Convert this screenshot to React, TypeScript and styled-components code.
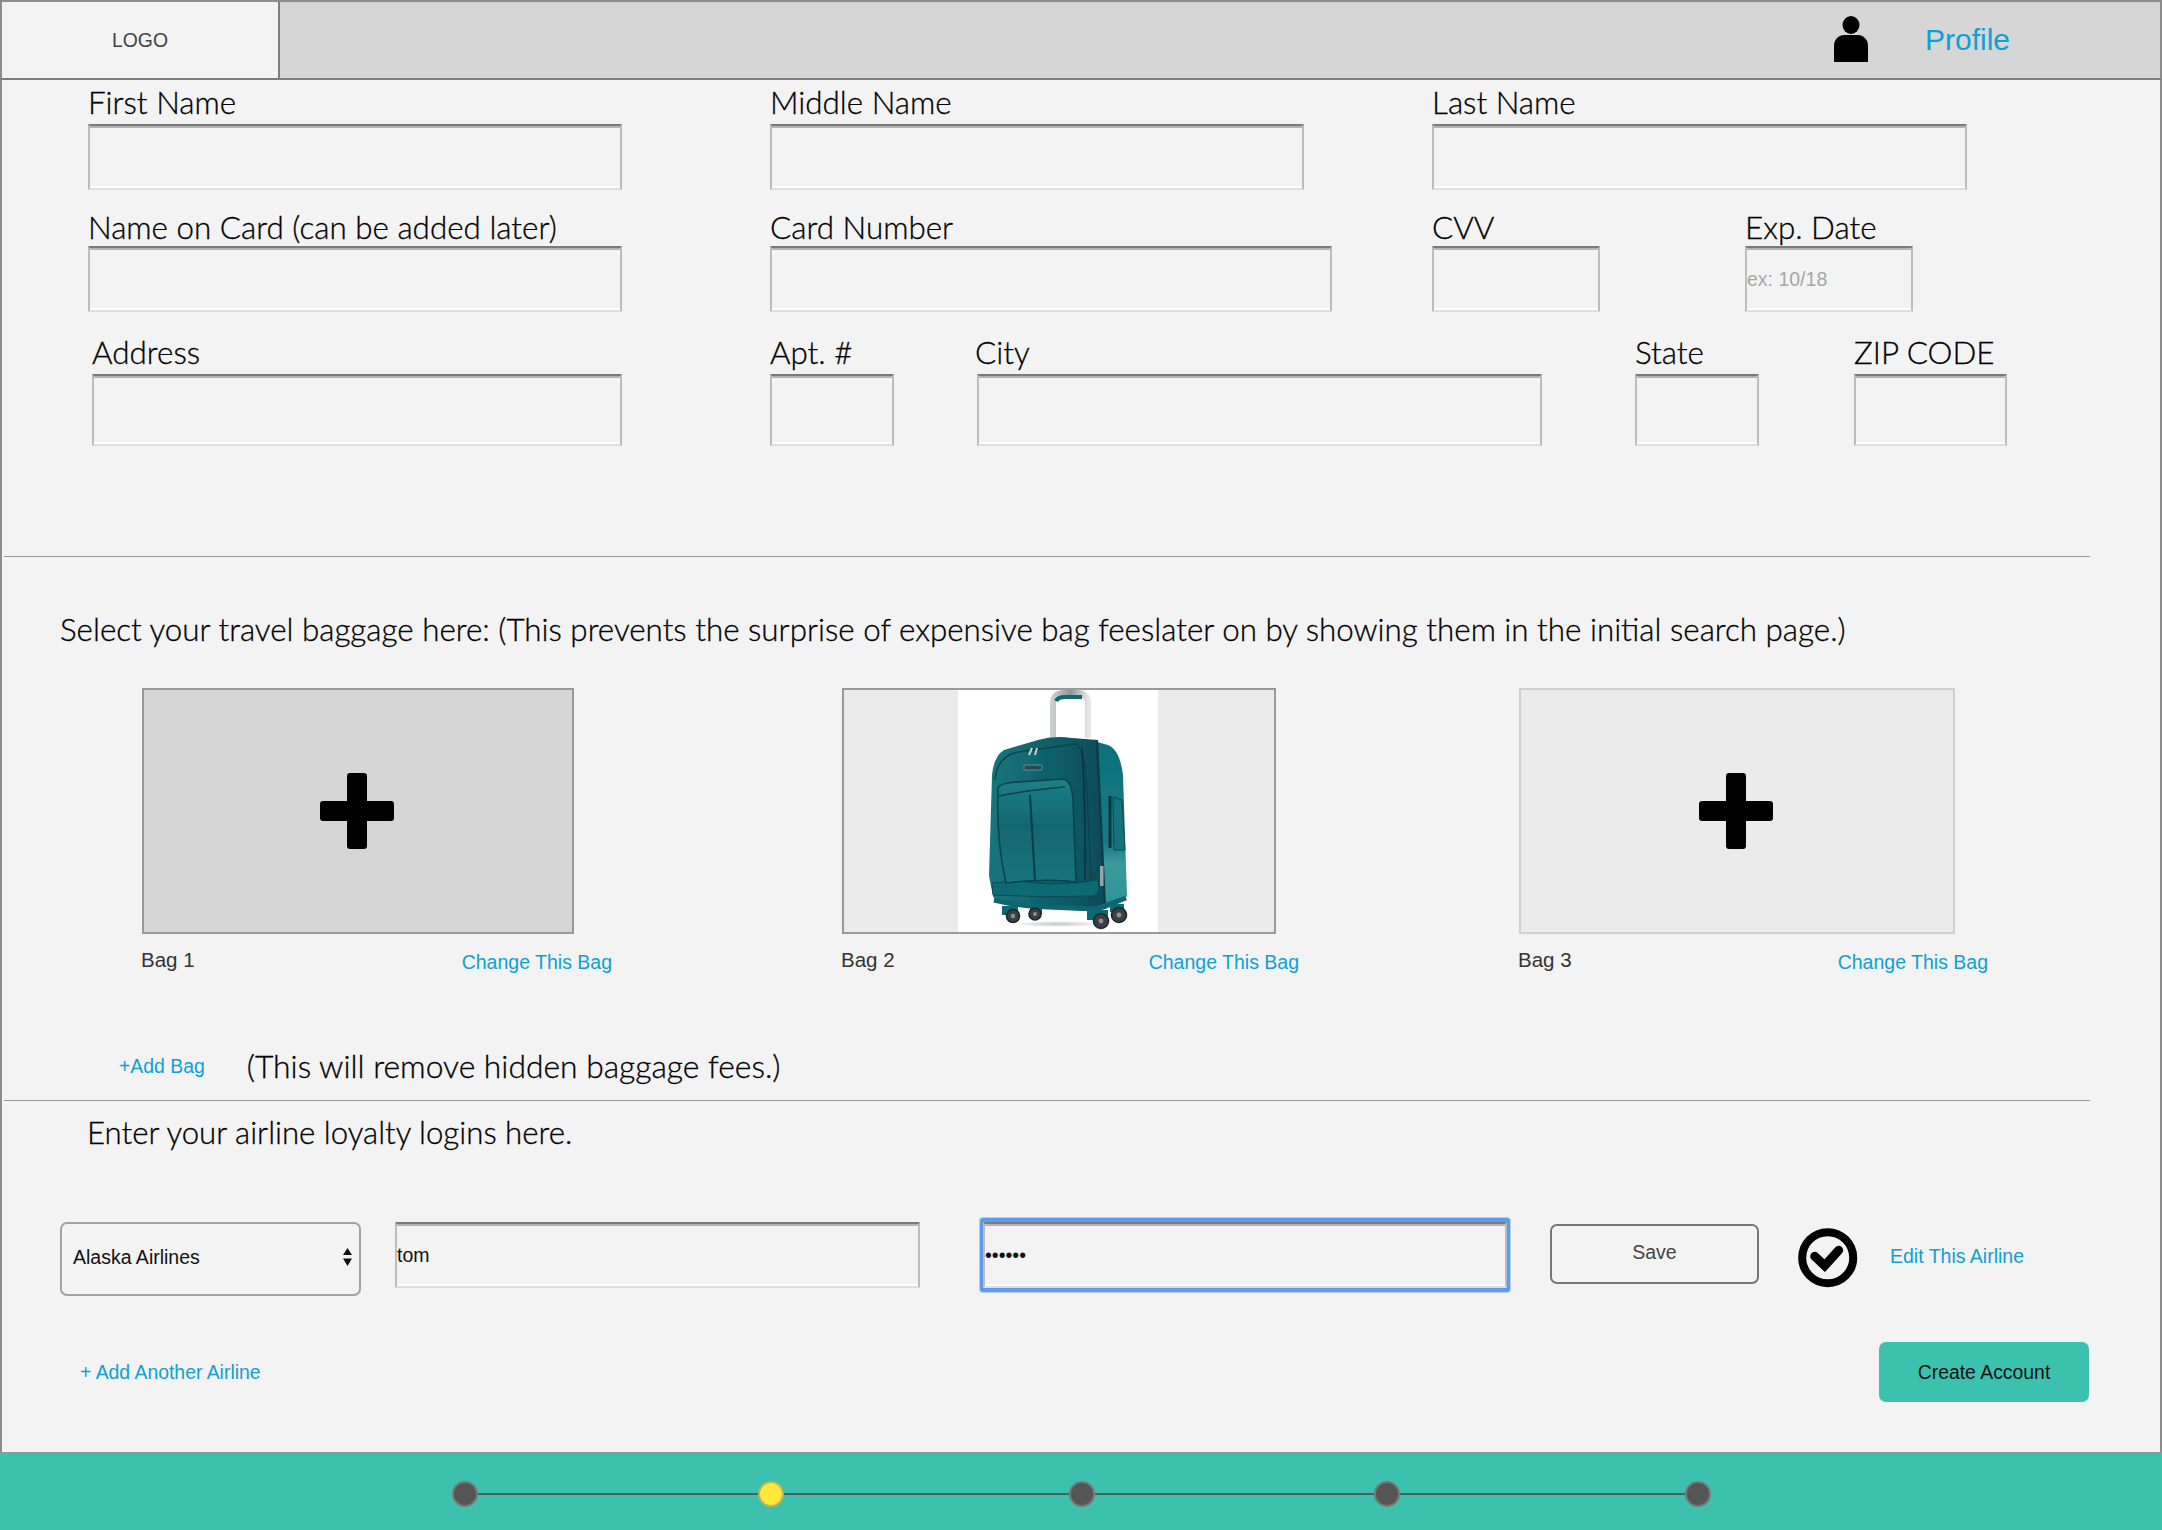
import React from 'react';
import styled, { createGlobalStyle } from 'styled-components';

const GlobalStyle = createGlobalStyle`
  html, body {
    margin: 0;
    padding: 0;
    background: #f3f3f3;
  }
  * {
    box-sizing: border-box;
  }
`;

const sans = `"Liberation Sans", Arial, sans-serif`;
const rounded = `Lato, "Open Sans", sans-serif`;
const linkBlue = '#0fa0d6';
const teal = '#3cc1ae';

const Page = styled.div`
  width: 2162px;
  height: 1530px;
  display: flex;
  flex-direction: column;
  background: #f3f3f3;
  overflow: hidden;
`;

const Header = styled.header`
  height: 80px;
  flex: none;
  display: flex;
  align-items: stretch;
  background: #d6d6d6;
  border: 2px solid #8c8c8c;
  border-bottom-color: #7f7f7f;
`;

const LogoBox = styled.div`
  width: 278px;
  display: flex;
  align-items: center;
  justify-content: center;
  background: #f3f3f3;
  border-right: 2px solid #7f7f7f;
  font: 19.4px ${sans};
  color: #444;
`;

const ProfileLink = styled.a`
  margin-left: auto;
  margin-right: 150px;
  display: flex;
  align-items: center;
  gap: 57px;
  font: 30px ${sans};
  color: ${linkBlue};
`;

const PersonSvg = styled.svg`
  margin-bottom: 2px;
`;

const Main = styled.main`
  flex: 1;
  display: flex;
  flex-direction: column;
  border-left: 2px solid #8c8c8c;
  border-right: 2px solid #8c8c8c;
`;

const FormRow = styled.div<{ $top: number; $left: number }>`
  display: flex;
  margin-top: ${(p) => p.$top}px;
  padding-left: ${(p) => p.$left}px;
`;

const Field = styled.label<{ $width: number; $gap?: number }>`
  width: ${(p) => p.$width}px;
  margin-left: ${(p) => p.$gap ?? 0}px;
  flex: none;
  display: block;
`;

const FieldLabel = styled.span<{ $height?: number; $shift?: number }>`
  display: block;
  height: ${(p) => p.$height ?? 40}px;
  margin-left: ${(p) => p.$shift ?? 0}px;
  font: 300 31.4px/36px ${rounded};
  color: #000;
  -webkit-text-stroke: 0.3px #000;
  white-space: nowrap;
  position: relative;
  z-index: 1;
`;

const TextBox = styled.input<{ $height: number }>`
  display: block;
  width: 100%;
  height: ${(p) => p.$height}px;
  padding: 0;
  border: 2px solid #bcbcbc;
  border-top-color: #7b7b7b;
  border-bottom-color: #dedede;
  border-radius: 0;
  box-shadow: inset 0 2px 0 #b4b4b4, inset 0 -2px 0 #fff;
  background: #f3f3f3;
  font: 19.5px ${sans};
  color: #111;
  outline: none;

  &::placeholder {
    color: #a6a6a6;
    opacity: 1;
  }
`;

const Divider = styled.hr<{ $top: number }>`
  width: 2086px;
  height: 1px;
  margin: ${(p) => p.$top}px 0 0 2px;
  border: 0;
  background: #999;
  flex: none;
`;

const SectionText = styled.p<{ $top: number; $left: number; $size?: number }>`
  margin: ${(p) => p.$top}px 0 0 ${(p) => p.$left}px;
  font: 300 ${(p) => p.$size ?? 31.35}px/36px ${rounded};
  color: #000;
  -webkit-text-stroke: 0.3px #000;
  white-space: nowrap;
`;

const BagRow = styled.div`
  display: flex;
  margin-top: 41px;
  padding-left: 140px;
`;

const BagColumn = styled.div<{ $width: number; $gap?: number }>`
  width: ${(p) => p.$width}px;
  margin-left: ${(p) => p.$gap ?? 0}px;
  flex: none;
`;

const BagTile = styled.div<{ $width: number; $tone: 'dark' | 'light' | 'faint' }>`
  width: ${(p) => p.$width}px;
  height: 246px;
  display: flex;
  align-items: center;
  justify-content: center;
  border: 2px solid ${(p) => (p.$tone === 'faint' ? '#cfcfcf' : '#999')};
  background: ${(p) => (p.$tone === 'dark' ? '#d6d6d6' : '#ebebeb')};
`;

const BagCaption = styled.div`
  display: flex;
  justify-content: space-between;
  margin-top: 11px;
  height: 30px;
`;

const BagName = styled.span`
  margin-left: -1px;
  font: 20.5px/30px ${sans};
  color: #333;
`;

const BlueLink = styled.a<{ $size?: number }>`
  font: ${(p) => p.$size ?? 19.5}px/30px ${sans};
  color: ${linkBlue};
  white-space: nowrap;
`;

const ChangeLink = styled(BlueLink)`
  margin-top: 2px;
`;

const AddBagLink = styled(BlueLink)`
  margin-top: 3px;
`;

const AddBagRow = styled.div`
  display: flex;
  align-items: flex-start;
  margin-top: 73px;
  padding-left: 117px;
  gap: 42px;
`;

const AirlineRow = styled.div`
  display: flex;
  align-items: flex-start;
  margin-top: 67px;
  padding-left: 58px;
`;

const SelectWrap = styled.div`
  position: relative;
  width: 301px;
  height: 74px;
  flex: none;
  margin-top: 5px;
`;

const AirlineSelect = styled.select`
  appearance: none;
  width: 100%;
  height: 100%;
  padding: 0 0 4px 11px;
  border: 2px solid #a3a3a3;
  border-radius: 7px;
  background: #f3f3f3;
  font: 19.5px ${sans};
  color: #111;
  outline: none;
`;

const Stepper = styled.svg`
  position: absolute;
  right: 9px;
  top: 26px;
  pointer-events: none;
`;

const LoginBox = styled.div`
  width: 525px;
  flex: none;
  margin: 5px 0 0 34px;
`;

const PasswordBox = styled.div`
  width: 530px;
  margin: 1px 0 0 60px;
  flex: none;
  padding: 4px 3px;
  border-radius: 3px;
  background: #5d9cec;
  box-shadow: 0 0 0 1px #b4cff2;
`;

const SaveButton = styled.button`
  width: 209px;
  height: 60px;
  margin: 7px 0 0 40px;
  flex: none;
  padding: 0 0 4px;
  border: 2px solid #777;
  border-radius: 7px;
  background: #f3f3f3;
  font: 19.5px ${sans};
  color: #444;
`;

const CheckIcon = styled.svg`
  flex: none;
  margin: 11px 0 0 39px;
`;

const EditLink = styled(BlueLink)`
  margin: 24px 0 0 32px;
`;

const ActionRow = styled.div`
  display: flex;
  align-items: center;
  justify-content: space-between;
  margin-top: 46px;
  padding: 0 71px 0 78px;
`;

const CreateButton = styled.button`
  width: 210px;
  height: 60px;
  border: 0;
  border-radius: 7px;
  background: ${teal};
  font: 19.4px ${sans};
  color: #111;
`;

const Footer = styled.footer`
  margin-top: auto;
  height: 78px;
  flex: none;
  display: flex;
  align-items: center;
  padding: 4px 0 0 452px;
  background: ${teal};
  border-top: 2px solid #8f9a97;
`;

const StepDot = styled.span<{ $active?: boolean }>`
  width: 26px;
  height: 26px;
  flex: none;
  border-radius: 50%;
  background: ${(p) => (p.$active ? '#ffe83a' : '#555')};
  border: 2px solid ${(p) => (p.$active ? '#b9b45c' : '#777')};
`;

const StepLine = styled.span<{ $width: number }>`
  width: ${(p) => p.$width}px;
  height: 2px;
  flex: none;
  background: #4f5f5c;
`;

const PhotoSvg = styled.svg`
  background: #fff;
  margin-right: 2px;
`;

const PlusSvg = styled.svg`
  margin-right: 2px;
`;

const PlusIcon = () => (
  <PlusSvg width="74" height="76" viewBox="0 0 74 76" aria-hidden="true">
    <rect x="27" y="0" width="20" height="76" rx="3" fill="#000" />
    <rect x="0" y="28" width="74" height="20" rx="3" fill="#000" />
  </PlusSvg>
);

const PersonIcon = () => (
  <PersonSvg width="34" height="46" viewBox="0 0 34 46" aria-hidden="true">
    <ellipse cx="17" cy="9" rx="8.5" ry="9" fill="#000" />
    <path d="M0 46V30C0 23 5 19 10 19H24C29 19 34 23 34 30V46Z" fill="#000" />
  </PersonSvg>
);

// drawn from the reference photo, blurred a little so it reads like a scaled-down image
const Suitcase = () => (
  <PhotoSvg width="200" height="242" viewBox="0 0 200 242" aria-label="Teal suitcase">
    <defs>
      <linearGradient id="metalLeft" x1="0" y1="0" x2="1" y2="0">
        <stop offset="0" stopColor="#c9cdce" />
        <stop offset="0.5" stopColor="#8d9496" />
        <stop offset="1" stopColor="#e6e8e8" />
      </linearGradient>
      <linearGradient id="frontPanel" x1="0" y1="0" x2="1" y2="0">
        <stop offset="0" stopColor="#16757c" />
        <stop offset="0.55" stopColor="#0f5f69" />
        <stop offset="1" stopColor="#0a4a57" />
      </linearGradient>
      <linearGradient id="pocketPanel" x1="0" y1="0" x2="0" y2="1">
        <stop offset="0" stopColor="#1c8086" />
        <stop offset="0.45" stopColor="#116670" />
        <stop offset="1" stopColor="#1a747a" />
      </linearGradient>
      <linearGradient id="sidePanel" x1="0" y1="0" x2="0" y2="1">
        <stop offset="0" stopColor="#0f7079" />
        <stop offset="0.6" stopColor="#157a82" />
        <stop offset="0.72" stopColor="#3a9a9c" />
        <stop offset="1" stopColor="#2f9297" />
      </linearGradient>
      <radialGradient id="floorShadow">
        <stop offset="0" stopColor="#bfc4c4" />
        <stop offset="1" stopColor="#ffffff" />
      </radialGradient>
      <filter id="soften" x="-5%" y="-5%" width="110%" height="110%">
        <feGaussianBlur stdDeviation="0.55" />
      </filter>
    </defs>
    <g filter="url(#soften)">
      <ellipse cx="100" cy="234" rx="46" ry="3" fill="url(#floorShadow)" />
      <path d="M95 48V14Q95 3 106 3H120Q130 3 130 14V48" fill="none" stroke="url(#metalLeft)" strokeWidth="6" />
      <path d="M98 11Q100 7 107 7H124" fill="none" stroke="#0f6a72" strokeWidth="4" />
      <path d="M132 50L150 55Q162 60 165 85L169 206Q165 214 147 219L136 222Z" fill="url(#sidePanel)" />
      <path d="M34 85Q36 66 46 60L80 50Q96 45 114 48L140 50Q143 130 147 219L130 221L60 217Q37 214 35 206L31 186Z" fill="url(#frontPanel)" />
      <path d="M34 193Q60 190 80 193T140 190L141 198Q140 206 134 206Q84 208 35 205Z" fill="#0e6a72" stroke="#0a4854" strokeWidth="1" />
      <path d="M40 98Q42 93 60 92L105 89Q113 90 115 108L118 192Q90 188 48 193Q38 150 40 98Z" fill="url(#pocketPanel)" stroke="#07404c" strokeWidth="1.5" />
      <path d="M41 106Q70 100 107 97" fill="none" stroke="#07404c" strokeWidth="1.6" />
      <path d="M72 105L77 191" stroke="#073c48" strokeWidth="2" />
      <path d="M37 90Q39 66 60 62L118 54Q127 60 129 100L133 190" fill="none" stroke="#08424e" strokeWidth="1.4" />
      <path d="M124 58Q128 120 127 190" fill="none" stroke="#0a2f42" strokeWidth="1.4" />
      <path d="M139 52Q143 130 147 219" fill="none" stroke="#073c48" strokeWidth="2.4" />
      <path d="M152 106L152 158" stroke="#082e38" strokeWidth="2.8" />
      <path d="M155 107L164 110L167 160L156 160Z" fill="#15727a" stroke="#0b4c56" strokeWidth="1" />
      <rect x="66" y="75" width="18" height="5" rx="1" fill="#29474f" stroke="#a3b2b5" strokeWidth="0.6" />
      <path d="M71 65L74 58M77 65L79 58" stroke="#c9d0d0" strokeWidth="2" />
      <rect x="142" y="176" width="3.5" height="20" fill="#98a6a8" />
      <path d="M36 210Q60 216 90 217L138 219L168 208" fill="none" stroke="#0e6570" strokeWidth="5" />
      <path d="M44 216H60V225H44ZM72 218H84V224H72ZM129 220H150V230H129ZM152 214H166V222H152Z" fill="#0f6973" />
      <g fill="#3e3f43" stroke="#172a31" strokeWidth="1.6">
        <circle cx="55" cy="226" r="6.5" />
        <circle cx="77" cy="224" r="6" />
        <circle cx="143" cy="231" r="7.5" />
        <circle cx="161" cy="225" r="7.5" />
      </g>
      <g fill="#8c9194">
        <circle cx="55" cy="226" r="2.2" />
        <circle cx="77" cy="224" r="2" />
        <circle cx="143" cy="231" r="2.4" />
        <circle cx="161" cy="225" r="2.4" />
      </g>
    </g>
  </PhotoSvg>
);

const bags = [
  { name: 'Bag 1', tile: 432, width: 470, gap: 0, tone: 'dark' as const, photo: false },
  { name: 'Bag 2', tile: 434, width: 457, gap: 230, tone: 'light' as const, photo: true },
  { name: 'Bag 3', tile: 436, width: 469, gap: 220, tone: 'faint' as const, photo: false },
];

const steps = [280, 285, 279, 285];

export default function App() {
  return (
    <Page>
      <GlobalStyle />
      <Header>
        <LogoBox>LOGO</LogoBox>
        <ProfileLink>
          <PersonIcon />
          Profile
        </ProfileLink>
      </Header>
      <Main>
        <FormRow $top={4} $left={86}>
          <Field $width={534}>
            <FieldLabel>First Name</FieldLabel>
            <TextBox $height={66} readOnly />
          </Field>
          <Field $width={534} $gap={148}>
            <FieldLabel>Middle Name</FieldLabel>
            <TextBox $height={66} readOnly />
          </Field>
          <Field $width={535} $gap={128}>
            <FieldLabel>Last Name</FieldLabel>
            <TextBox $height={66} readOnly />
          </Field>
        </FormRow>
        <FormRow $top={19} $left={86}>
          <Field $width={534}>
            <FieldLabel $height={37}>Name on Card (can be added later)</FieldLabel>
            <TextBox $height={66} readOnly />
          </Field>
          <Field $width={562} $gap={148}>
            <FieldLabel $height={37}>Card Number</FieldLabel>
            <TextBox $height={66} readOnly />
          </Field>
          <Field $width={168} $gap={100}>
            <FieldLabel $height={37}>CVV</FieldLabel>
            <TextBox $height={66} readOnly />
          </Field>
          <Field $width={168} $gap={145}>
            <FieldLabel $height={37}>Exp. Date</FieldLabel>
            <TextBox $height={66} placeholder="ex: 10/18" readOnly />
          </Field>
        </FormRow>
        <FormRow $top={22} $left={90}>
          <Field $width={530}>
            <FieldLabel>Address</FieldLabel>
            <TextBox $height={72} readOnly />
          </Field>
          <Field $width={124} $gap={148}>
            <FieldLabel>Apt. #</FieldLabel>
            <TextBox $height={72} readOnly />
          </Field>
          <Field $width={565} $gap={83}>
            <FieldLabel $shift={-2}>City</FieldLabel>
            <TextBox $height={72} readOnly />
          </Field>
          <Field $width={124} $gap={93}>
            <FieldLabel>State</FieldLabel>
            <TextBox $height={72} readOnly />
          </Field>
          <Field $width={153} $gap={95}>
            <FieldLabel>ZIP CODE</FieldLabel>
            <TextBox $height={72} readOnly />
          </Field>
        </FormRow>
        <Divider $top={110} />
        <SectionText $top={54} $left={58}>
          Select your travel baggage here: (This prevents the surprise of expensive bag feeslater on by showing them in the initial search page.)
        </SectionText>
        <BagRow>
          {bags.map((bag) => (
            <BagColumn key={bag.name} $width={bag.width} $gap={bag.gap}>
              <BagTile $width={bag.tile} $tone={bag.tone}>
                {bag.photo ? <Suitcase /> : <PlusIcon />}
              </BagTile>
              <BagCaption>
                <BagName>{bag.name}</BagName>
                <ChangeLink>Change This Bag</ChangeLink>
              </BagCaption>
            </BagColumn>
          ))}
        </BagRow>
        <AddBagRow>
          <AddBagLink $size={19.4}>+Add Bag</AddBagLink>
          <SectionText $top={0} $left={0} $size={31.8}>(This will remove hidden baggage fees.)</SectionText>
        </AddBagRow>
        <Divider $top={16} />
        <SectionText $top={13} $left={85} $size={31.2}>Enter your airline loyalty logins here.</SectionText>
        <AirlineRow>
          <SelectWrap>
            <AirlineSelect defaultValue="alaska">
              <option value="alaska">Alaska Airlines</option>
            </AirlineSelect>
            <Stepper width="9" height="18" viewBox="0 0 9 18" aria-hidden="true">
              <path d="M4.5 0L9 7H0ZM4.5 18L0 10.5H9Z" fill="#111" />
            </Stepper>
          </SelectWrap>
          <LoginBox>
            <TextBox $height={66} defaultValue="tom" readOnly />
          </LoginBox>
          <PasswordBox>
            <TextBox $height={66} type="password" defaultValue="secret" readOnly />
          </PasswordBox>
          <SaveButton>Save</SaveButton>
          <CheckIcon width="60" height="60" viewBox="0 0 60 60" aria-hidden="true">
            <circle cx="29.7" cy="29.7" r="25.5" fill="none" stroke="#000" strokeWidth="8" />
            <path d="M16.7 28.3L26.7 37.7L40.7 22.3" fill="none" stroke="#000" strokeWidth="9" strokeLinecap="round" />
          </CheckIcon>
          <EditLink>Edit This Airline</EditLink>
        </AirlineRow>
        <ActionRow>
          <BlueLink $size={19.4}>+ Add Another Airline</BlueLink>
          <CreateButton>Create Account</CreateButton>
        </ActionRow>
      </Main>
      <Footer>
        {steps.map((width, i) => (
          <React.Fragment key={i}>
            <StepDot $active={i === 1} />
            <StepLine $width={width} />
          </React.Fragment>
        ))}
        <StepDot />
      </Footer>
    </Page>
  );
}
